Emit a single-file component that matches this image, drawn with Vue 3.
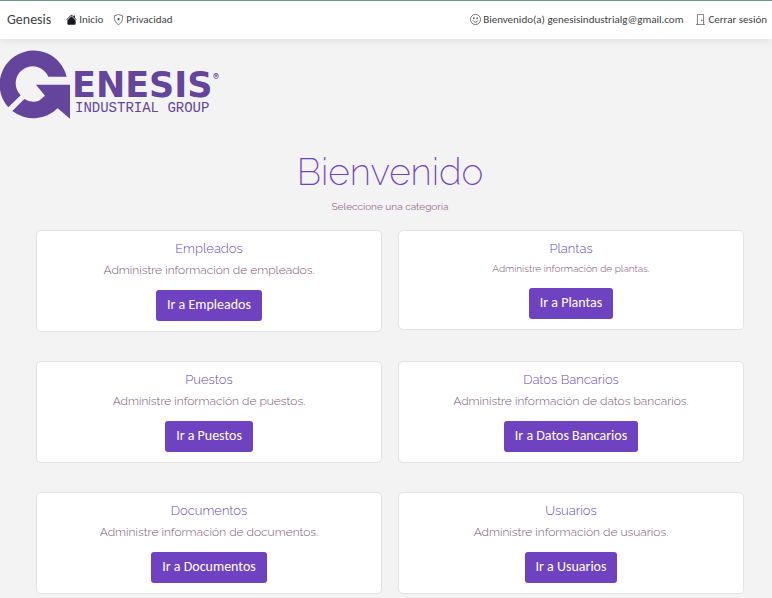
<script setup>
const categories = [
  { name: 'Empleados', text: 'Administre información de empleados.' },
  { name: 'Plantas', text: 'Administre información de plantas.', compact: true },
  { name: 'Puestos', text: 'Administre información de puestos.' },
  { name: 'Datos Bancarios', text: 'Administre información de datos bancarios.' },
  { name: 'Documentos', text: 'Administre información de documentos.' },
  { name: 'Usuarios', text: 'Administre información de usuarios.' },
]
</script>

<template>
  <header class="topbar">
    <a class="brand" href="#">Genesis</a>
    <nav class="links">
      <a href="#">
        <svg class="icon" viewBox="0 0 16 16" fill="#17181c" aria-hidden="true">
          <path d="M8 3.3l6 6V14a1.5 1.5 0 0 1-1.5 1.5h-9A1.5 1.5 0 0 1 2 14V9.300z" />
          <path d="M13 2.500V6l-2-2V2.500a.5.5 0 0 1 .5-.5h1a.5.5 0 0 1 .5.5z" />
          <path d="M7.300 1.500a1 1 0 0 1 1.400 0l6.650 6.650-.7.700L8 2.200 1.350 8.850l-.7-.7z" />
        </svg>
        Inicio
      </a>
      <a href="#">
        <svg class="icon" viewBox="0 0 16 16" fill="none" stroke="currentColor" aria-hidden="true">
          <path d="M8 .6C6.600 1.300 4.200 2.100 2.200 2.500 1.500 8 3 12.800 8 15.400 13 12.800 14.500 8 13.800 2.500 11.800 2.100 9.400 1.300 8 .6z" />
          <path d="M8 5.200l.7 1.400 1.500.2-1.100 1.100.3 1.500L8 8.700l-1.400.7.3-1.500-1.100-1.100 1.500-.2z" fill="currentColor" stroke="none" />
        </svg>
        Privacidad
      </a>
    </nav>
    <nav class="links account">
      <a href="#">
        <svg class="icon" viewBox="0 0 16 16" fill="none" stroke="currentColor" aria-hidden="true">
          <circle cx="8" cy="8" r="7.400" />
          <path d="M4.500 9.800a4 4 0 0 0 7 0" stroke-linecap="round" />
          <ellipse cx="5.600" cy="6.300" rx="1" ry="1.400" fill="currentColor" stroke="none" />
          <ellipse cx="10.400" cy="6.300" rx="1" ry="1.400" fill="currentColor" stroke="none" />
        </svg>
        Bienvenido(a) genesisindustrialg@gmail.com
      </a>
      <a href="#">
        <svg class="icon" viewBox="0 0 16 16" fill="none" stroke="currentColor" aria-hidden="true">
          <path d="M1.500 15.500h13M3.500 15.500v-14a1 1 0 0 1 1-1h7a1 1 0 0 1 1 1v14" />
          <circle cx="10" cy="9" r="1" fill="currentColor" stroke="none" />
        </svg>
        Cerrar sesión
      </a>
    </nav>
  </header>

  <main>
    <svg class="logo" viewBox="0 0 224 72" role="img" aria-label="Genesis Industrial Group">
      <g transform="translate(0 -8) scale(.33333)">
        <path d="M200 110A102 102 0 1 0 25 202L62 166A51 51 0 1 1 145 110Z" />
        <path d="M37 213L73 177A51 51 0 0 0 117 182L135 167L108 134H210V236L173 205A103 103 0 0 1 37 213Z" />
      </g>
      <text class="logo-name" x="72" y="49">ENESIS</text>
      <text class="logo-mark" x="213" y="32">®</text>
      <text class="logo-sub" x="75" y="64">INDUSTRIAL GROUP</text>
    </svg>

    <section class="intro">
      <h1>Bienvenido</h1>
      <p>Seleccione una categoría</p>
    </section>

    <section class="grid">
      <article v-for="c in categories" :key="c.name" class="card" :class="{ compact: c.compact }">
        <h2>{{ c.name }}</h2>
        <p>{{ c.text }}</p>
        <a class="button" href="#">Ir a {{ c.name }}</a>
      </article>
    </section>
  </main>
</template>

<style>
body {
  margin: 0;
  background: #f3f3f3;
}
</style>

<style scoped>
.topbar {
  display: flex;
  align-items: center;
  box-sizing: border-box;
  height: 39px;
  padding: 0 5px 2px 7px;
  border-top: 1px solid #6f9295;
  background: #fff;
  box-shadow: 0 2px 8px rgba(0, 0, 0, 0.08);
  font-family: Carlito, Lato, sans-serif;
  font-size: 11px;
  color: #3c3f44;
}

a {
  color: inherit;
  text-decoration: none;
}

.brand {
  font-size: 14px;
  margin-right: 15px;
}

.links {
  display: flex;
  gap: 10px;
}

.links a {
  display: flex;
  align-items: center;
  gap: 2px;
  white-space: nowrap;
}

.account {
  margin-left: auto;
  gap: 12px;
}

.icon {
  width: 11px;
  height: 11px;
}

.logo {
  display: block;
  width: 224px;
  height: 72px;
  margin-top: 9px;
  fill: #64459b;
}

.logo-name {
  font: 700 35px "DejaVu Sans", sans-serif;
}

.logo-mark {
  font: 700 9px Inter, sans-serif;
}

.logo-sub {
  font: 14px "Liberation Mono", monospace;
}

.intro {
  margin-top: 29px;
  padding-left: 8px;
  text-align: center;
  font-family: Raleway, Inter, sans-serif;
}

h1 {
  margin: 0;
  font-size: 37px;
  font-weight: 200;
  line-height: 46px;
  color: #6f42c1;
}

.intro p {
  margin: 4px 0 0;
  font-size: 10px;
  font-weight: 400;
  line-height: 16px;
  color: #977092;
}

.grid {
  display: grid;
  grid-template-columns: 1fr 1fr;
  align-items: start;
  gap: 29px 16px;
  padding: 15px 28px 4px 36px;
}

.card {
  padding: 10px;
  border: 1px solid #e2e2e2;
  border-radius: 5px;
  background: #fff;
  text-align: center;
  font-family: Raleway, Inter, sans-serif;
  font-weight: 300;
}

.card h2 {
  margin: 0 0 4px;
  font-size: 13px;
  font-weight: 300;
  line-height: 16px;
  color: #6c4cb8;
}

.card p {
  margin: 0 0 11px;
  font-size: 12px;
  line-height: 18px;
  color: #7d5079;
}

.card.compact p {
  font-size: 10px;
  line-height: 16px;
}

.button {
  display: inline-block;
  vertical-align: top;
  padding: 0 11px 2px;
  border-radius: 3px;
  background: #6f42c1;
  color: #fff;
  font-family: Carlito, Lato, sans-serif;
  font-size: 14px;
  font-weight: 400;
  line-height: 29px;
}
</style>
